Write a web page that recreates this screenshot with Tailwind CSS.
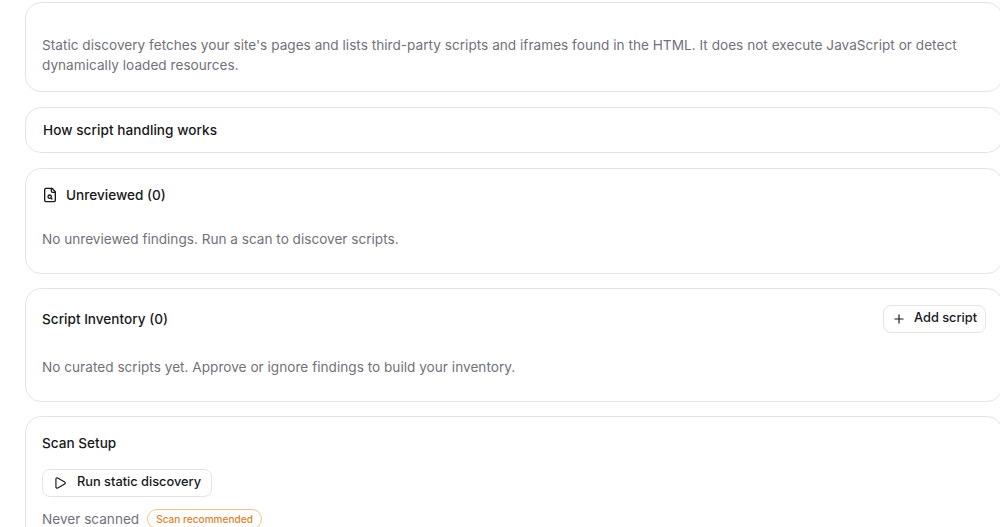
<!DOCTYPE html>
<html>
<head>
<meta charset="utf-8">
<script src="https://cdn.jsdelivr.net/npm/@tailwindcss/browser@4"></script>
</head>
<body class="bg-white">
<div class="h-[527px] w-[1000px] overflow-hidden font-['Inter',sans-serif]">
  <div class="ml-[25px] flex w-[978px] flex-col gap-[15px] pt-[2px]">
    <section class="h-[90px] rounded-2xl border border-zinc-200 bg-white px-4 pt-[32px]">
      <p class="text-[13.6px] leading-5 tracking-[0.02px] text-zinc-500">Static discovery fetches your site's pages and lists third-party scripts and iframes found in the HTML. It does not execute JavaScript or detect dynamically loaded resources.</p>
    </section>
    <section class="flex h-[46px] items-center rounded-2xl border border-zinc-200 bg-white px-[17px]">
      <h3 class="text-[13.6px] font-[450] tracking-[0.05px] text-zinc-900">How script handling works</h3>
    </section>
    <section class="-mb-px h-[106px] rounded-2xl border border-zinc-200 bg-white px-4 pt-4">
      <div class="flex h-5 items-center gap-2">
        <svg class="h-4 w-4 text-zinc-900" viewBox="0 0 24 24" fill="none" stroke="currentColor" stroke-width="2" stroke-linecap="round" stroke-linejoin="round"><path d="M15 2H6a2 2 0 0 0-2 2v16a2 2 0 0 0 2 2h12a2 2 0 0 0 2-2V7Z"/><path d="M14 2v4a2 2 0 0 0 2 2h4"/><circle cx="11.5" cy="14.5" r="2.5"/><path d="M13.3 16.3 15 18"/></svg>
        <h3 class="text-[13.6px] font-[450] text-zinc-900">Unreviewed (0)</h3>
      </div>
      <p class="mt-6 text-[13.6px] leading-5 text-zinc-500">No unreviewed findings. Run a scan to discover scripts.</p>
    </section>
    <section class="-mb-px h-[114px] rounded-2xl border border-zinc-200 bg-white px-4 pt-4">
      <div class="flex h-7 items-center justify-between">
        <h3 class="text-[13.6px] font-[450] text-zinc-900">Script Inventory (0)</h3>
        <button class="flex h-7 w-[103px] items-center gap-2 rounded-lg border border-zinc-200 bg-white pl-2 text-[12.8px] font-[450] text-zinc-900">
          <svg class="h-3.5 w-3.5" viewBox="0 0 24 24" fill="none" stroke="currentColor" stroke-width="2" stroke-linecap="round" stroke-linejoin="round"><path d="M5 12h14"/><path d="M12 5v14"/></svg>
          <span class="mb-[2px]">Add script</span>
        </button>
      </div>
      <p class="mt-6 text-[13.6px] leading-5 tracking-[0.02px] text-zinc-500">No curated scripts yet. Approve or ignore findings to build your inventory.</p>
    </section>
    <section class="h-[140px] rounded-2xl border border-zinc-200 bg-white px-4 pt-4">
      <h3 class="text-[13.6px] font-[450] leading-5 text-zinc-900">Scan Setup</h3>
      <button class="mt-4 flex h-7 w-[170px] items-center gap-2.5 rounded-lg border border-zinc-200 bg-white pl-2.5 text-[12.8px] font-[450] text-zinc-900">
        <svg class="h-3.5 w-3.5" viewBox="0 0 24 24" fill="none" stroke="currentColor" stroke-width="2" stroke-linecap="round" stroke-linejoin="round"><path d="M5 5a2 2 0 0 1 3.008-1.728l11.997 6.998a2 2 0 0 1 .003 3.458l-12 7A2 2 0 0 1 5 19z"/></svg>
        <span class="mb-[2px]">Run static discovery</span>
      </button>
      <div class="mt-3 flex items-center gap-2">
        <span class="text-[13.6px] leading-5 text-zinc-500">Never scanned</span>
        <span class="rounded-full border border-[#f4c48e] bg-white px-2 py-[2px] text-[10px] font-medium leading-[14px] tracking-[0.05px] text-[#d9822b]">Scan recommended</span>
      </div>
    </section>
  </div>
</div>
</body>
</html>
